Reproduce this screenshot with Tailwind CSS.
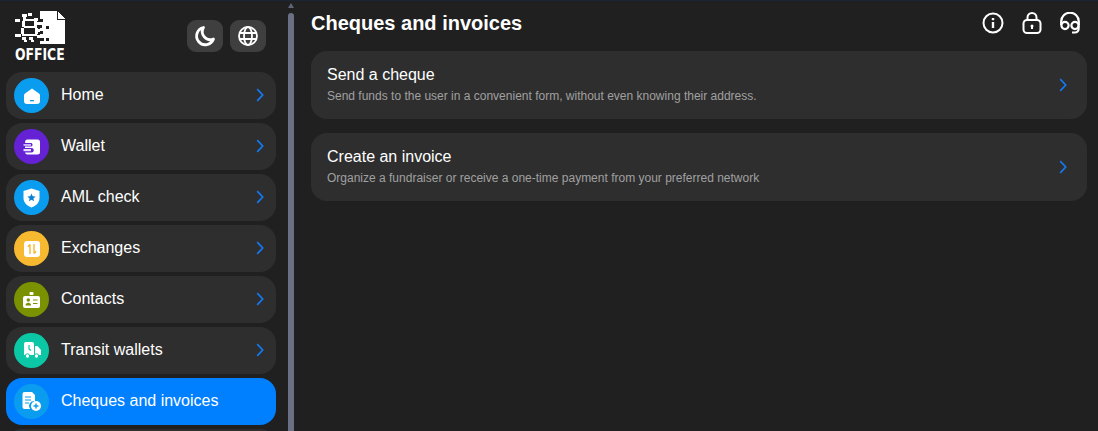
<!doctype html>
<html>
<head>
<meta charset="utf-8">
<script src="https://cdn.jsdelivr.net/npm/@tailwindcss/browser@4"></script>
</head>
<body class="m-0 bg-[#202020]">
<div class="flex flex-col h-[431px] w-[1098px] overflow-hidden bg-[#202020] text-white font-['Liberation_Sans',Arial,sans-serif]">
<div class="h-px bg-[#1a2433] shrink-0"></div>
<div class="flex flex-1 min-h-0">
  <aside class="w-[288px] shrink-0 pl-[6px] overflow-hidden flex flex-col">
    <div class="h-[71px] shrink-0 flex w-[270px]">
      <div class="ml-[9px] mt-[10px] w-[52px] flex flex-col">
        <svg width="51" height="34" viewBox="0 0 51 34" fill="#fff" shape-rendering="crispEdges">
          <path d="M7 3h5v3H7zM13 2h4v3h-4zM8 6h3v2H8zM0 8h5v3H0zM8 8h14v2H8zM19 7h4v3h-4zM7 10h3v6H7zM19 10h3v5h-3zM9 15h13v2H9zM6 17h3v6H6zM20 17h3v6h-3zM0 23h6v3H0zM7 23h15v2H7zM7 26h4v3H7zM14 26h4v3h-4zM9 29h3v2H9zM16 29h3v2h-3z"/>
          <path d="M25 0H42V9H50V33H25Z"/>
          <path d="M43 1 50 8H43Z"/>
          <path d="M25 8h3v3h-3zM25 14h2v3h-2zM31 15h3v3h-3zM25 20h3v3h-3zM25 27h4v3h-4zM31 27h3v3h-3z" fill="#202020"/>
          <path d="M22 11h3v3h-3zM23 18h2v3h-2zM22 24h3v3h-3z"/>
        </svg>
        <span class="inline-block origin-left scale-x-[0.86] font-['DejaVu_Sans_Condensed',sans-serif] font-bold text-[16px] leading-[14px] mt-[3px] w-[60px]">OFFICE</span>
      </div>
      <div class="ml-auto mr-[10px] mt-[19px] flex gap-[7px]">
        <div class="w-[36px] h-[32px] rounded-[9px] bg-[#3f3f3f] flex items-center justify-center">
          <svg width="24" height="24" viewBox="0 0 24 24" fill="none" stroke="#fff" stroke-width="2.8" stroke-linecap="round" stroke-linejoin="round"><path d="M10.500 3.500A8.700 8.700 0 1 0 20.500 15 8 8 0 0 1 10.500 3.500z"/></svg>
        </div>
        <div class="w-[36px] h-[32px] rounded-[9px] bg-[#3f3f3f] flex items-center justify-center">
          <svg width="22" height="22" viewBox="0 0 22 22" fill="none" stroke="#fff" stroke-width="1.8"><circle cx="11" cy="11" r="9"/><ellipse cx="11" cy="11" rx="4" ry="9"/><path d="M2.600 8h16.800M2.600 14h16.800"/></svg>
        </div>
      </div>
    </div>
    <nav class="flex flex-col gap-[4px] w-[270px]">
      <a class="h-[47px] rounded-[16px] bg-[#2e2e2e] flex items-center pl-[8px] pr-[12px] shrink-0">
        <span class="w-[35px] h-[35px] rounded-full bg-[#0a9cef] flex items-center justify-center">
          <svg width="18" height="18" viewBox="0 0 18 18"><path d="M9 1.500 16 6.500c.6.4 1 1 1 1.800V14a3 3 0 0 1-3 3H4a3 3 0 0 1-3-3V8.300c0-.8.4-1.400 1-1.800z" fill="#fff"/><rect x="7" y="13" width="4" height="1.300" fill="#0a9cef"/></svg>
        </span>
        <span class="ml-[12px] text-[16px] pb-[2px]">Home</span>
        <svg class="ml-auto mb-[1px]" width="8" height="14" viewBox="0 0 8 14" fill="none" stroke="#1478f0" stroke-width="1.700"><path d="M1.200 1.200 6.700 7 1.200 12.800"/></svg>
      </a>
      <a class="h-[47px] rounded-[16px] bg-[#2e2e2e] flex items-center pl-[8px] pr-[12px] shrink-0">
        <span class="w-[35px] h-[35px] rounded-full bg-[#6422d4] flex items-center justify-center">
          <svg width="17" height="16" viewBox="0 0 17 16"><path d="M4 .5h10.500A2.500 2.500 0 0 1 17 3v10a2.500 2.500 0 0 1-2.500 2.500H4A2.500 2.500 0 0 1 2 13.500h6.500a2 2 0 0 0 0-4.500H2V7.500h6.500a2 2 0 0 0 0-3.500H2.300A2.500 2.500 0 0 1 4 .5z" fill="#fff"/><rect x="0.500" y="5.200" width="7.500" height="1.500" fill="#e8dcff"/><rect x="0.500" y="10" width="7.500" height="2.200" fill="#e8dcff"/></svg>
        </span>
        <span class="ml-[12px] text-[16px] pb-[2px]">Wallet</span>
        <svg class="ml-auto mb-[1px]" width="8" height="14" viewBox="0 0 8 14" fill="none" stroke="#1478f0" stroke-width="1.700"><path d="M1.200 1.200 6.700 7 1.200 12.800"/></svg>
      </a>
      <a class="h-[47px] rounded-[16px] bg-[#2e2e2e] flex items-center pl-[8px] pr-[12px] shrink-0">
        <span class="w-[35px] h-[35px] rounded-full bg-[#0a9cef] flex items-center justify-center">
          <svg width="17" height="20" viewBox="0 0 17 20"><path d="M8.500 .5 16.500 3v7c0 4.500-3.500 8-8 9.500C4 18 .5 14.500 .5 10V3z" fill="#fff"/><path d="M8.500 5.500l1.200 2.700 2.900.3-2.200 1.900.7 2.900-2.600-1.500-2.600 1.500.7-2.900-2.200-1.900 2.900-.3z" fill="#0a7fd8"/></svg>
        </span>
        <span class="ml-[12px] text-[16px] pb-[2px]">AML check</span>
        <svg class="ml-auto mb-[1px]" width="8" height="14" viewBox="0 0 8 14" fill="none" stroke="#1478f0" stroke-width="1.700"><path d="M1.200 1.200 6.700 7 1.200 12.800"/></svg>
      </a>
      <a class="h-[47px] rounded-[16px] bg-[#2e2e2e] flex items-center pl-[8px] pr-[12px] shrink-0">
        <span class="w-[35px] h-[35px] rounded-full bg-[#f6b92f] flex items-center justify-center">
          <svg width="16" height="16" viewBox="0 0 16 16"><rect width="16" height="16" rx="3" fill="#fff"/><path d="M6 13V3.500M3.800 5.800 6 3.500M10 3v9.500M12.200 10.200 10 12.500" fill="none" stroke="#f6b92f" stroke-width="1.400"/></svg>
        </span>
        <span class="ml-[12px] text-[16px] pb-[2px]">Exchanges</span>
        <svg class="ml-auto mb-[1px]" width="8" height="14" viewBox="0 0 8 14" fill="none" stroke="#1478f0" stroke-width="1.700"><path d="M1.200 1.200 6.700 7 1.200 12.800"/></svg>
      </a>
      <a class="h-[47px] rounded-[16px] bg-[#2e2e2e] flex items-center pl-[8px] pr-[12px] shrink-0">
        <span class="w-[35px] h-[35px] rounded-full bg-[#7a9100] flex items-center justify-center">
          <svg width="17" height="16" viewBox="0 0 17 16"><rect x="0" y="4" width="17" height="12" rx="2" fill="#fff"/><rect x="6.500" y="0" width="4" height="3" rx="1" fill="#fff"/><circle cx="5.300" cy="8" r="1.700" fill="#7a9100"/><path d="M2.500 13.500c0-2 1.300-2.800 2.800-2.800s2.800.8 2.800 2.800z" fill="#7a9100"/><path d="M10 8h4.500M10 11.500h4.500" stroke="#7a9100" stroke-width="1.200"/></svg>
        </span>
        <span class="ml-[12px] text-[16px] pb-[2px]">Contacts</span>
        <svg class="ml-auto mb-[1px]" width="8" height="14" viewBox="0 0 8 14" fill="none" stroke="#1478f0" stroke-width="1.700"><path d="M1.200 1.200 6.700 7 1.200 12.800"/></svg>
      </a>
      <a class="h-[47px] rounded-[16px] bg-[#2e2e2e] flex items-center pl-[8px] pr-[12px] shrink-0">
        <span class="w-[35px] h-[35px] rounded-full bg-[#0bc7a5] flex items-center justify-center">
          <svg width="18" height="17" viewBox="0 0 18 17"><path d="M2.500 0H9a2 2 0 0 1 2 2v11H1V2A2 2 0 0 1 2.500 0z" fill="#fff"/><path d="M12 4h2.500L18 8v5h-6z" fill="#fff"/><circle cx="4.500" cy="14" r="2.200" fill="#fff" stroke="#0bc7a5"/><circle cx="13.500" cy="14" r="2.200" fill="#fff" stroke="#0bc7a5"/><path d="M6 3v4l2 1.500" fill="none" stroke="#0bc7a5" stroke-width="1.200"/></svg>
        </span>
        <span class="ml-[12px] text-[16px] pb-[2px]">Transit wallets</span>
        <svg class="ml-auto mb-[1px]" width="8" height="14" viewBox="0 0 8 14" fill="none" stroke="#1478f0" stroke-width="1.700"><path d="M1.200 1.200 6.700 7 1.200 12.800"/></svg>
      </a>
      <a class="h-[47px] rounded-[16px] bg-[#0080ff] flex items-center pl-[8px] pr-[12px] shrink-0">
        <span class="w-[35px] h-[35px] rounded-full bg-[#0a9cef] flex items-center justify-center">
          <svg width="20" height="20" viewBox="0 0 20 20"><path d="M2.500 0H10l3 3v6a5 5 0 0 0-4.800 8H2.500A2 2 0 0 1 .5 15V2A2 2 0 0 1 2.500 0z" fill="#fff"/><path d="M3 5h6M3 8h6M3 11h4" stroke="#0a9cef" stroke-width="1.200"/><circle cx="14" cy="14" r="5" fill="#fff"/><path d="M14 11.500v5M11.500 14h5" stroke="#0a9cef" stroke-width="1.400"/></svg>
        </span>
        <span class="ml-[12px] text-[16px] pb-[2px]">Cheques and invoices</span>
      </a>
      <a class="h-[47px] rounded-[16px] bg-[#2e2e2e] shrink-0"></a>
    </nav>
  </aside>
  <div class="w-[6px] shrink-0 flex flex-col items-center">
    <div class="mt-[2px] w-0 h-0 border-x-[3px] border-x-transparent border-b-[5px] border-b-[#5f6477]"></div>
    <div class="mt-[5px] flex-1 w-[6px] rounded-t-[3px] bg-[#6b7085]"></div>
  </div>
  <main class="flex-1 min-w-0 pl-[17px] pr-[11px] flex flex-col">
    <header class="h-[50px] shrink-0 flex items-start">
      <h1 class="text-[20px] leading-[23px] mt-[11px] font-bold">Cheques and invoices</h1>
      <div class="ml-auto mr-[6px] mt-[11px] flex items-center gap-[17px]">
        <svg class="mr-px" width="22" height="22" viewBox="0 0 22 22" fill="none" stroke="#fff" stroke-width="2"><circle cx="11" cy="11" r="9.500"/><path d="M11 10v6" stroke-width="2.400"/><path d="M11 6v2.200" stroke-width="2.400"/></svg>
        <svg width="20" height="22" viewBox="0 0 20 22" fill="none" stroke="#fff" stroke-width="2"><rect x="1.500" y="8" width="17" height="13" rx="3.500"/><path d="M5.500 8V5.500a4.500 4.500 0 0 1 9 0V8"/><circle cx="10" cy="14" r="1.500" fill="#fff" stroke="none"/><path d="M10 14v3"/></svg>
        <svg width="22" height="22" viewBox="0 0 22 22" fill="none" stroke="#fff" stroke-width="2.200"><path d="M2.200 13V9.500a8.800 8.800 0 0 1 17.600 0V13"/><circle cx="6" cy="13.500" r="3.600"/><circle cx="16" cy="13.500" r="3.600"/><path d="M19.600 13.500V17a3.500 3.500 0 0 1-3.500 3.500H13"/></svg>
      </div>
    </header>
    <section class="h-[68px] rounded-[16px] bg-[#2e2e2e] flex items-center pl-[16px] pr-[20px] shrink-0">
      <div class="flex flex-col pb-[2px]">
        <span class="text-[16px] leading-[18px]">Send a cheque</span>
        <span class="text-[12px] leading-[14px] mt-[5px] text-[#a0a0a0]">Send funds to the user in a convenient form, without even knowing their address.</span>
      </div>
      <svg class="ml-auto" width="8" height="14" viewBox="0 0 8 14" fill="none" stroke="#1478f0" stroke-width="1.700"><path d="M1.200 1.200 6.700 7 1.200 12.800"/></svg>
    </section>
    <section class="mt-[14px] h-[68px] rounded-[16px] bg-[#2e2e2e] flex items-center pl-[16px] pr-[20px] shrink-0">
      <div class="flex flex-col pb-[2px]">
        <span class="text-[16px] leading-[18px]">Create an invoice</span>
        <span class="text-[12px] leading-[14px] mt-[5px] text-[#a0a0a0]">Organize a fundraiser or receive a one-time payment from your preferred network</span>
      </div>
      <svg class="ml-auto" width="8" height="14" viewBox="0 0 8 14" fill="none" stroke="#1478f0" stroke-width="1.700"><path d="M1.200 1.200 6.700 7 1.200 12.800"/></svg>
    </section>
  </main>
</div>
</div>
</body>
</html>
